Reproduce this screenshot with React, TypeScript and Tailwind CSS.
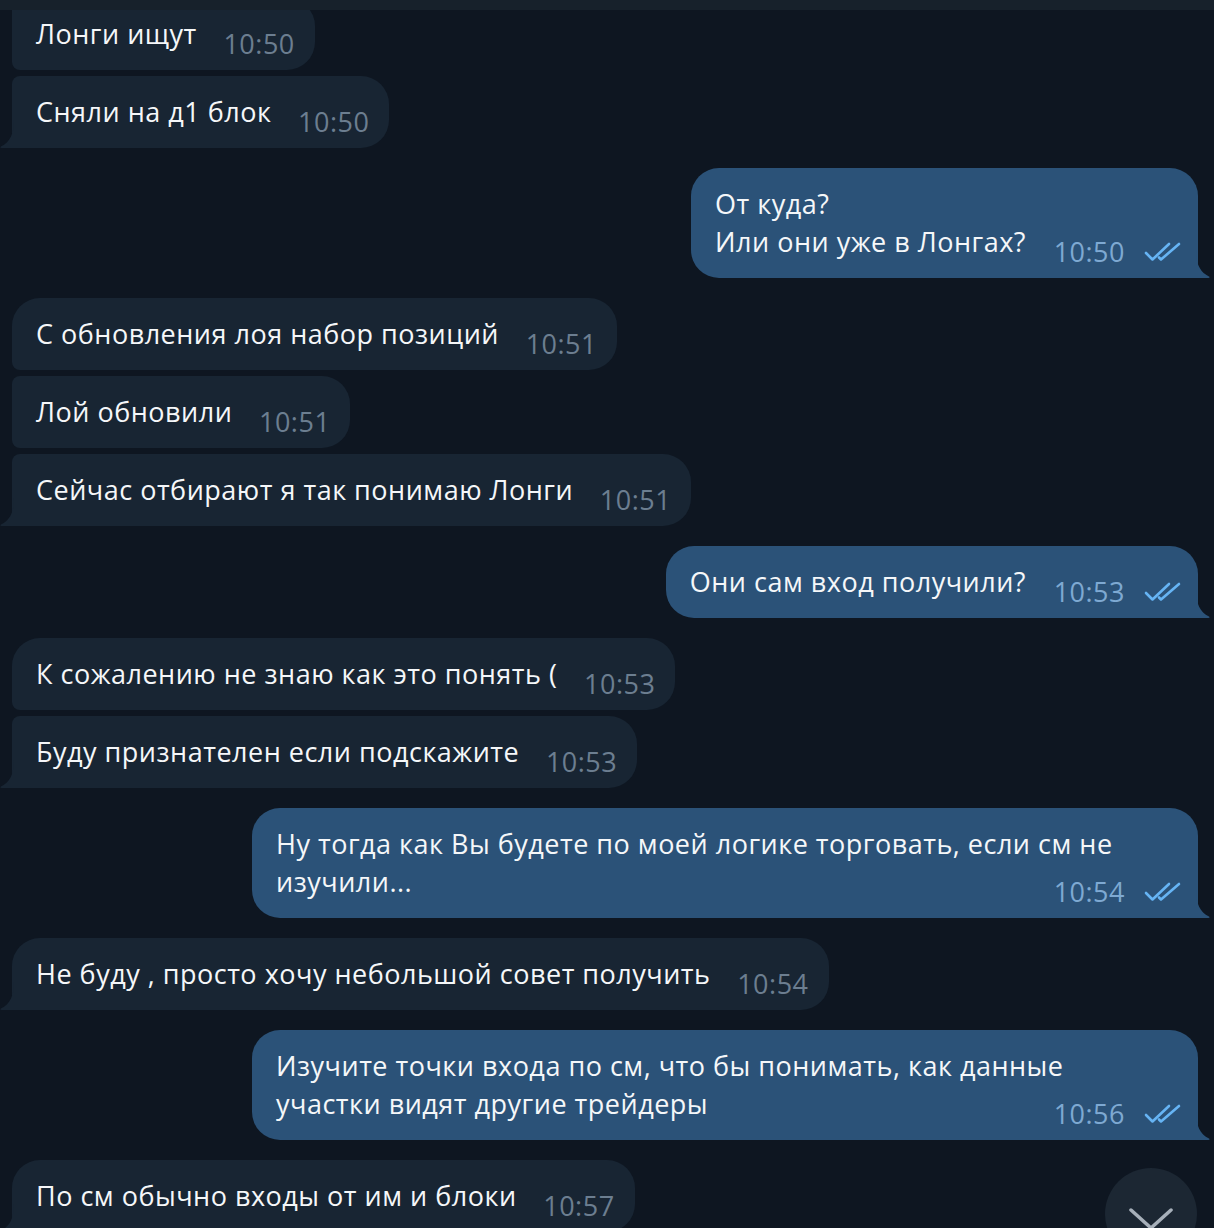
import React from "react";

type Pos = "first" | "middle" | "last" | "single";
type Msg = { out: boolean; lines: string[]; time: string; pos: Pos; wide?: boolean };

const msgs: Msg[][] = [
  [
    { out: false, lines: ["Лонги ищут"], time: "10:50", pos: "middle" },
    { out: false, lines: ["Сняли на д1 блок"], time: "10:50", pos: "last" },
  ],
  [{ out: true, lines: ["От куда?", "Или они уже в Лонгах?"], time: "10:50", pos: "single" }],
  [
    { out: false, lines: ["С обновления лоя набор позиций"], time: "10:51", pos: "first" },
    { out: false, lines: ["Лой обновили"], time: "10:51", pos: "middle" },
    { out: false, lines: ["Сейчас отбирают я так понимаю Лонги"], time: "10:51", pos: "last" },
  ],
  [{ out: true, lines: ["Они сам вход получили?"], time: "10:53", pos: "single" }],
  [
    { out: false, lines: ["К сожалению не знаю как это понять ("], time: "10:53", pos: "first" },
    { out: false, lines: ["Буду признателен если подскажите"], time: "10:53", pos: "last" },
  ],
  [
    {
      out: true,
      lines: ["Ну тогда как Вы будете по моей логике торговать, если см не", "изучили..."],
      time: "10:54",
      pos: "single",
      wide: true,
    },
  ],
  [{ out: false, lines: ["Не буду , просто хочу небольшой совет получить"], time: "10:54", pos: "single" }],
  [
    {
      out: true,
      lines: ["Изучите точки входа по см, что бы понимать, как данные", "участки видят другие трейдеры"],
      time: "10:56",
      pos: "single",
      wide: true,
    },
  ],
  [{ out: false, lines: ["По см обычно входы от им и блоки"], time: "10:57", pos: "single" }],
];

const Checks = () => (
  <svg width="40" height="20" viewBox="0 0 40 20" fill="none">
    <path d="M3 11 L9.5 17.5 L26 2" stroke="#66b4f4" strokeWidth="2.6" strokeLinecap="round" strokeLinejoin="round" />
    <path d="M16 15.5 L18 17.5 L36 2" stroke="#66b4f4" strokeWidth="2.6" strokeLinecap="round" strokeLinejoin="round" />
  </svg>
);

const TailIn = ({ color }: { color: string }) => (
  <svg className="absolute bottom-0 left-[-12px]" width="14" height="28" viewBox="0 0 14 28">
    <path d="M14 0 C14 14 10 22 1 26.5 C0 27 0.3 28 1.5 28 L14 28 Z" fill={color} />
  </svg>
);

const TailOut = ({ color }: { color: string }) => (
  <svg className="absolute bottom-0 right-[-14px]" width="16" height="28" viewBox="0 0 16 28">
    <path d="M0 0 C0 14 4 22 13 26.5 C14 27 13.7 28 12.5 28 L0 28 Z" fill={color} />
  </svg>
);

function Bubble({ m }: { m: Msg }) {
  const tail = m.pos === "last" || m.pos === "single";
  const big = "28px";
  const small = "8px";
  let tl = big,
    bl = big,
    tr = big,
    br = big;
  if (!m.out) {
    tl = m.pos === "first" || m.pos === "single" ? big : small;
    bl = tail ? "0px" : small;
  } else {
    br = tail ? "0px" : small;
  }
  const color = m.out ? "#2b5278" : "#182533";
  return (
    <div
      className={`relative pt-[17px] pb-[17px] pl-[24px] text-[27px] leading-[38px] tracking-[0.5px] text-[#f5f7f9] ${
        m.out ? "self-end mr-[16px] bg-[#2b5278] pr-[15px]" : "self-start ml-[12px] bg-[#182533] pr-[20px]"
      } ${m.wide ? "w-[946px]" : ""}`}
      style={{ borderRadius: `${tl} ${tr} ${br} ${bl}` }}
    >
      {m.lines.map((l, i) => (
        <React.Fragment key={i}>
          {l}
          {i < m.lines.length - 1 ? <br /> : null}
        </React.Fragment>
      ))}
      <span className={`inline-block ${m.out ? "w-[157px]" : "w-[98px]"}`} />
      <span
        className={`absolute bottom-[11px] flex items-center gap-[18px] text-[27px] leading-[30px] tracking-[0.5px] ${
          m.out ? "right-[15px] text-[#7ea9d2]" : "right-[20px] text-[#6c7e90]"
        }`}
      >
        {m.time}
        {m.out ? <Checks /> : null}
      </span>
      {tail ? m.out ? <TailOut color={color} /> : <TailIn color={color} /> : null}
    </div>
  );
}

export default function App() {
  return (
    <div
      className="relative h-[1228px] w-full overflow-hidden bg-[#0e1621]"
      style={{ fontFamily: '"Open Sans", "Noto Sans", sans-serif' }}
    >
      <div className="relative z-10 h-[10px] bg-[#17212b]" />
      <div className="mt-[-12px] flex flex-col gap-[20px]">
        {msgs.map((g, gi) => (
          <div key={gi} className="flex flex-col gap-[6px]">
            {g.map((m, mi) => (
              <Bubble key={mi} m={m} />
            ))}
          </div>
        ))}
      </div>
      <div className="absolute left-[1105px] top-[1168px] flex h-[92px] w-[92px] justify-center rounded-full bg-[#1c2733]">
        <svg className="mt-[38px]" width="48" height="28" viewBox="0 0 48 28" fill="none">
          <path d="M4 4 L24 22 L44 4" stroke="#a7b0ba" strokeWidth="3.5" strokeLinecap="round" strokeLinejoin="round" />
        </svg>
      </div>
    </div>
  );
}
